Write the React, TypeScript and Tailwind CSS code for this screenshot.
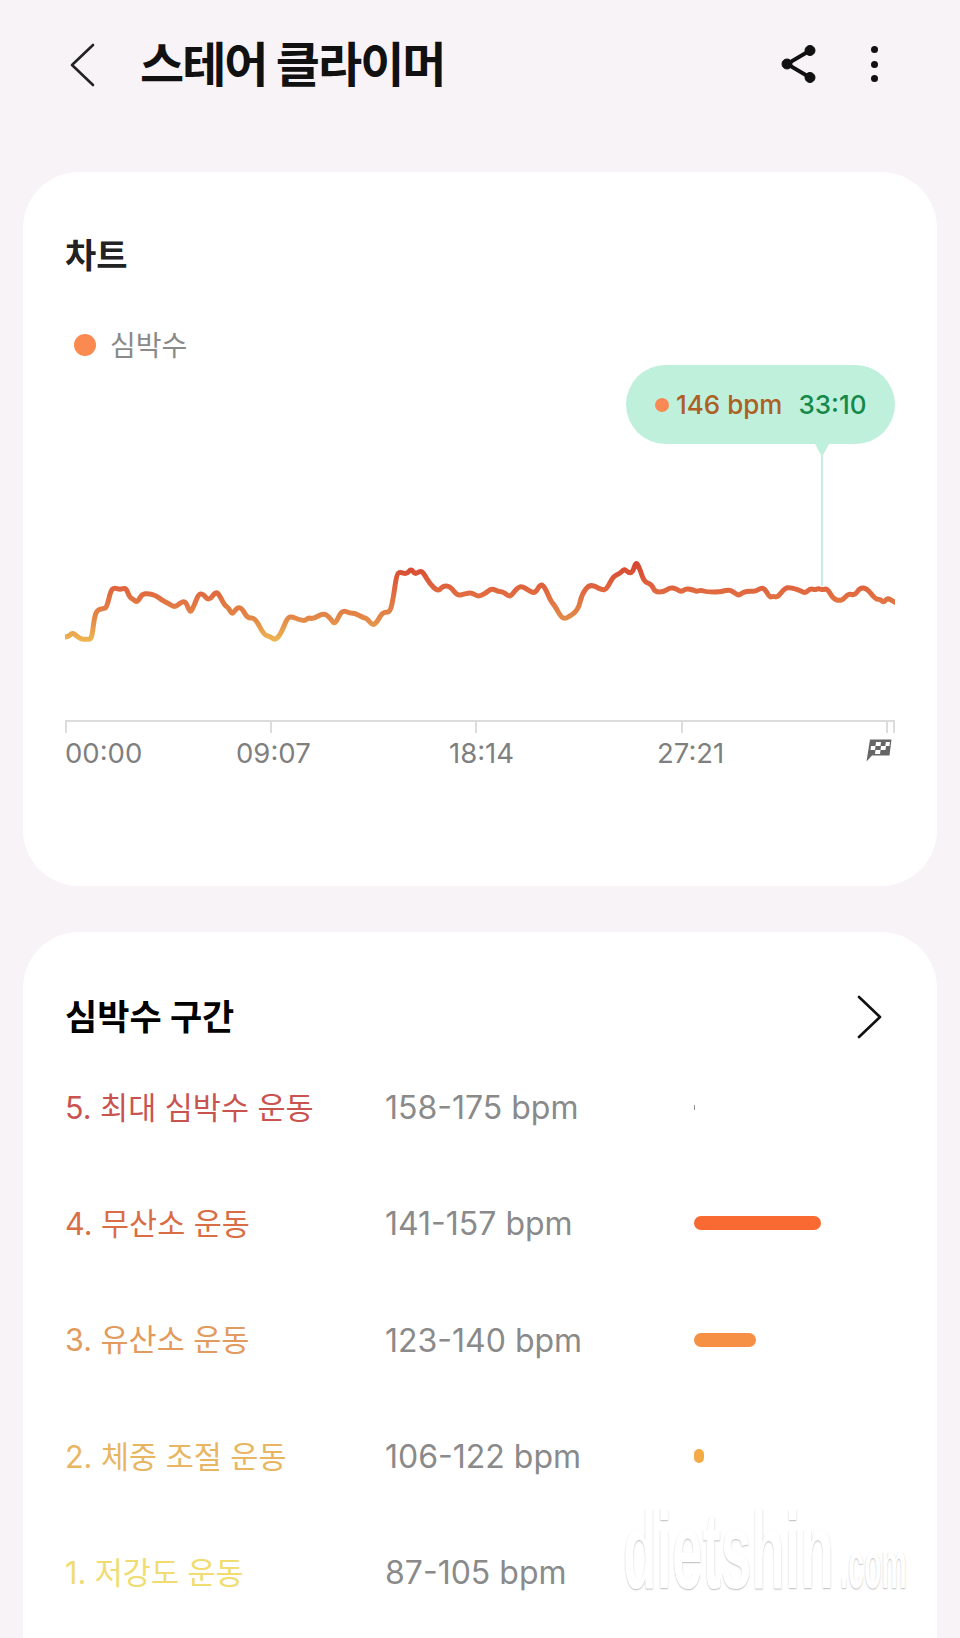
import React from "react";

const FONT = "font-['Inter','Noto_Sans_CJK_KR',sans-serif]";

// traced from the reference, page coordinates minus the chart origin
const left = "75,318 85,318 97,305 110,315 125,326 140,324 155,326 163,260 172,236 190,233 200,230 212,180 222,170 240,176 258,170 268,198 280,205 292,215 305,190 325,187 350,195 365,207 385,217 405,230 425,212 438,212 450,247 462,225 475,190 488,188 507,210 527,182 537,190 553,222 565,230 577,252 590,230 605,230 622,262 645,260 672,312 690,316 705,328 722,310 742,260 755,257 775,265 795,270 805,260 820,264 850,246 870,260 885,283 905,236 930,247 945,247 970,260 980,262 997,283 1010,275 1028,243 1050,245 1060,200 1070,130 1080,123 1100,130 1113,113 1125,130 1140,120 1150,125 1170,160 1195,182 1208,165 1230,165 1252,195 1275,188 1295,185 1310,195";
const right = "0,195 15,188 35,172 55,182 70,182 90,200 110,172 125,165 145,178 165,188 182,158 195,170 212,210 225,225 245,262 260,262 295,237 305,190 330,158 365,177 380,175 400,135 420,128 433,113 445,125 458,125 468,90 480,115 492,152 515,160 525,183 550,183 570,170 585,172 605,183 618,172 640,177 650,182 662,177 680,183 720,183 740,177 755,178 775,195 790,183 810,180 825,182 845,170 855,175 870,200 880,195 892,200 915,170 935,170 965,180 975,187 992,172 1005,177 1015,172 1028,177 1042,172 1060,205 1085,210 1105,188 1125,193 1140,170 1160,172 1187,205 1200,205 1212,215 1222,200 1243,213";

const toPoints = (raw: string, ox: number) =>
  raw.split(" ").map((p) => {
    const [x, y] = p.split(",").map(Number);
    return [ox + x / 3 - 65, 530 + y / 3 - 349];
  });

// rounds the traced corners: quadratic through the midpoints
const smoothPath = (pts: number[][]) => {
  let d = `M${pts[0][0].toFixed(1)} ${pts[0][1].toFixed(1)}`;
  for (let i = 1; i < pts.length - 1; i++) {
    const mx = (pts[i][0] + pts[i + 1][0]) / 2;
    const my = (pts[i][1] + pts[i + 1][1]) / 2;
    d += ` Q${pts[i][0].toFixed(1)} ${pts[i][1].toFixed(1)} ${mx.toFixed(1)} ${my.toFixed(1)}`;
  }
  const last = pts[pts.length - 1];
  return `${d} L${last[0].toFixed(1)} ${last[1].toFixed(1)}`;
};

const linePath = smoothPath([...toPoints(left, 40), ...toPoints(right, 480)]);

interface Zone {
  label: string;
  range: string;
  color: string;
  bar: string;
}

const zones: Zone[] = [
  { label: "5. 최대 심박수 운동", range: "158-175 bpm", color: "text-[#c9544f]", bar: "w-px h-[5px] bg-[#8a8a8a]" },
  { label: "4. 무산소 운동", range: "141-157 bpm", color: "text-[#d96d45]", bar: "w-[127px] h-[14px] bg-[#f96a32]" },
  { label: "3. 유산소 운동", range: "123-140 bpm", color: "text-[#e29b5e]", bar: "w-[62px] h-[14px] bg-[#f59044]" },
  { label: "2. 체중 조절 운동", range: "106-122 bpm", color: "text-[#e8b662]", bar: "w-[10px] h-[14px] bg-[#f5ab45]" },
  { label: "1. 저강도 운동", range: "87-105 bpm", color: "text-[#f0dc70]", bar: "hidden" },
];

const Chart: React.FC = () => (
  <div className="relative mt-[-12px] h-[384px] w-[830px]">
    <div className="absolute left-[561px] top-[15px] flex h-[79px] w-[269px] items-center rounded-full bg-[#bff0dc] pl-[29px] text-[26px] leading-none">
      <span className="h-[14px] w-[14px] rounded-full bg-[#fa8a55]" />
      <span className="ml-[7px] font-medium text-[#ad5f24]">146 bpm</span>
      <span className="ml-[16px] font-medium text-[#14894a]">33:10</span>
    </div>
    <svg width="830" height="384" viewBox="0 0 830 384" fill="none">
      <defs>
        <linearGradient id="hr" gradientUnits="userSpaceOnUse" x1="0" y1="210" x2="0" y2="295">
          <stop offset="0" stopColor="#d5432f" />
          <stop offset="0.35" stopColor="#e0673f" />
          <stop offset="0.7" stopColor="#e38a48" />
          <stop offset="1" stopColor="#efbe55" />
        </linearGradient>
      </defs>
      <path d="M750 94 L764 94 L757 107 Z" fill="#bff0dc" />
      <line x1="757" y1="100" x2="757" y2="236" stroke="#c8ece0" strokeWidth="2" />
      <path d={linePath} stroke="url(#hr)" strokeWidth="5" strokeLinejoin="round" strokeLinecap="round" />
      <g stroke="#dcdcdc" strokeWidth="2">
        <line x1="0" y1="371" x2="830" y2="371" />
        <line x1="1" y1="371" x2="1" y2="383" />
        <line x1="206" y1="371" x2="206" y2="383" />
        <line x1="411" y1="371" x2="411" y2="383" />
        <line x1="617" y1="371" x2="617" y2="383" />
        <line x1="822" y1="371" x2="822" y2="383" />
        <line x1="829" y1="371" x2="829" y2="383" />
      </g>
    </svg>
  </div>
);

const FlagIcon: React.FC = () => (
  <svg width="26" height="23" viewBox="0 0 26 23" fill="none" className="mt-[-5px]">
    <path d="M4 0.5 H25.5 L23.5 16.5 H6 L0.5 22.5 Z" fill="#666666" />
    <path d="M10 3 H15 L14.5 7 H9.5 Z M15 7 H20 L19.5 11 H14.5 Z M9.5 11 H14.5 L14 15 H9 Z M19.8 3 H24 L23.5 7 H19.3 Z M5 7 H9.5 L9 11 H4.5 Z" fill="#ffffff" />
  </svg>
);

const App: React.FC = () => (
  <div className={`h-[1638px] w-[960px] overflow-hidden bg-[#f8f3f7] ${FONT}`}>
    <header className="flex h-[172px] items-start pl-[70px] pr-[82px] pt-[43px]">
      <svg width="26" height="44" viewBox="0 0 26 44" fill="none" stroke="#222" strokeWidth="2.6" strokeLinecap="round" strokeLinejoin="round">
        <path d="M23 2 L2 22 L23 42" />
      </svg>
      <h1 className="ml-[44px] mt-[-6px] text-[48px] font-bold leading-[56px] tracking-[-2px] text-[#111]">스테어 클라이머</h1>
      <div className="ml-auto flex items-center pt-[1px]">
        <svg width="40" height="40" viewBox="0 0 40 40" fill="#111" stroke="#111">
          <path d="M31 6.5 L8 20 L31 33.5" strokeWidth="3.8" fill="none" />
          <circle cx="31" cy="6.5" r="5" />
          <circle cx="8" cy="20" r="5" />
          <circle cx="31" cy="33.5" r="5" />
        </svg>
        <div className="ml-[52px] flex flex-col gap-[7.5px]">
          <span className="h-[7px] w-[7px] rounded-full bg-[#111]" />
          <span className="h-[7px] w-[7px] rounded-full bg-[#111]" />
          <span className="h-[7px] w-[7px] rounded-full bg-[#111]" />
        </div>
      </div>
    </header>

    <section className="mx-[23px] h-[714px] rounded-[56px] bg-white px-[42px] pt-[64px]">
      <h2 className="text-[34px] font-bold leading-[40px] text-[#222]">차트</h2>
      <div className="mt-[54px] flex items-center pl-[9px]">
        <span className="mt-[-2px] h-[22px] w-[22px] rounded-full bg-[#fa8a50]" />
        <span className="ml-[14px] text-[28px] leading-[32px] text-[#8a8a8a]">심박수</span>
      </div>
      <Chart />
      <div className="mt-[2px] flex w-[830px] items-center text-[27.5px] leading-[34px] text-[#7f7f7f]">
        <span className="w-[171px]">00:00</span>
        <span className="w-[213px]">09:07</span>
        <span className="w-[208px]">18:14</span>
        <span>27:21</span>
        <span className="ml-auto mr-[3px]">
          <FlagIcon />
        </span>
      </div>
    </section>

    <section className="relative mx-[23px] mt-[46px] h-[760px] rounded-[56px] bg-white px-[42px]">
      <div className="flex h-[118px] items-start justify-between pt-[63px]">
        <h2 className="text-[35px] font-bold leading-[44px] text-black">심박수 구간</h2>
        <svg width="26" height="44" viewBox="0 0 26 44" fill="none" stroke="#111" strokeWidth="2.6" strokeLinecap="round" strokeLinejoin="round" className="mr-[13px]">
          <path d="M3 2 L24 22 L3 42" />
        </svg>
      </div>
      {zones.map((z) => (
        <div key={z.label} className="grid h-[116.3px] grid-cols-[320px_309px_1fr] items-center">
          <span className={`text-[30.5px] leading-none ${z.color}`}>{z.label}</span>
          <span className="text-[32px] leading-none text-[#8a8a8a]">{z.range}</span>
          <span className={`mb-[2px] rounded-full ${z.bar}`} />
        </div>
      ))}
      {/* dietshin watermark */}
      <div className="pointer-events-none absolute inset-0 font-['Liberation_Sans',sans-serif] font-bold leading-none text-white [text-shadow:0_1px_2px_#bdbdbd]">
        <span className="absolute left-[600px] top-[563px] origin-left text-[110px] [transform:scaleX(0.5)]">dietshin</span>
        <span className="absolute left-[817px] top-[598px] origin-left text-[69px] [transform:scaleX(0.415)]">.com</span>
      </div>
    </section>
  </div>
);

export default App;
